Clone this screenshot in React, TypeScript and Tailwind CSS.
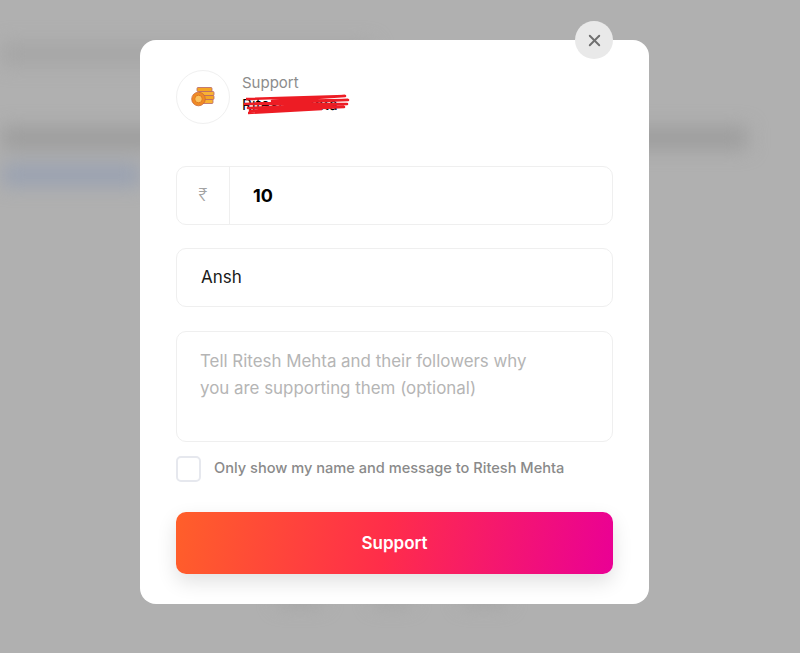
import React from "react";
import { X } from "lucide-react";

function Coins() {
  return (
    <svg width="24" height="21" viewBox="0 0 24 21">
      <rect x="6" y="0.5" width="15" height="4" rx="1" fill="#f5a623" stroke="#b5656b" strokeWidth="0.8" />
      <rect x="8" y="4.5" width="15" height="4" rx="1" fill="#f9b233" stroke="#b5656b" strokeWidth="0.8" />
      <rect x="8" y="8.5" width="15" height="4" rx="1" fill="#f5a623" stroke="#b5656b" strokeWidth="0.8" />
      <rect x="8" y="12.5" width="14" height="4" rx="1" fill="#f9b233" stroke="#b5656b" strokeWidth="0.8" />
      <circle cx="7.5" cy="12" r="6.8" fill="#f08a24" stroke="#c9683a" strokeWidth="0.8" />
      <circle cx="7.5" cy="12" r="3.8" fill="#fbc15e" stroke="#e07b1f" strokeWidth="1" />
    </svg>
  );
}

function Scribble() {
  return (
    <svg className="absolute left-0 -top-[2px]" width="108" height="24" viewBox="0 0 108 24">
      <path d="M4 5 L103 2 L30 7 L106 6 L3 10 L105 10 L6 14 L102 13 L8 17 L60 16 M6 19 L80 15" fill="none" stroke="#ed1c24" strokeWidth="2.6" strokeLinejoin="round" />
    </svg>
  );
}

export default function App() {
  return (
    <div className="relative w-full h-[653px] overflow-hidden bg-[#b0b0b0]" style={{ fontFamily: "Inter, 'Noto Sans', sans-serif" }}>
      {/* blurred page behind */}
      <div className="flex flex-col pt-[44px] pl-[2px] blur-[10px]">
        <div className="w-[370px] h-[20px] bg-[#a4a4a4]" />
        <div className="w-[745px] h-[20px] mt-[64px] bg-[#9a9a9a]" />
        <div className="w-[140px] h-[18px] mt-[18px] bg-[#949eb2]" />
        <div className="flex gap-[52px] mt-[404px] ml-[276px]">
          <div className="w-[44px] h-[16px] bg-[#a4a4a4]" />
          <div className="w-[36px] h-[16px] bg-[#a4a4a4]" />
          <div className="w-[44px] h-[16px] bg-[#a4a4a4]" />
        </div>
      </div>

      <div className="absolute left-[140px] top-[40px] w-[509px] h-[564px] bg-white rounded-[16px] px-[36px] pt-[30px]">
        <button className="absolute left-[435px] -top-[19px] w-[38px] h-[38px] rounded-full bg-[#e9e9e9] flex items-center justify-center text-[#6f6f6f]">
          <X className="w-[19px] h-[19px]" strokeWidth={2.4} />
        </button>

        <div className="flex items-center gap-[12px]">
          <div className="w-[54px] h-[54px] rounded-full border border-[#f0f0f0] flex items-center justify-center">
            <Coins />
          </div>
          <div className="flex flex-col gap-[3px] -mt-[7px]">
            <span className="text-[15px] leading-[20px] text-[#8c8c8c]">Support</span>
            <div className="relative w-[105px] h-[18px] text-[15px] tracking-[0.3px] leading-[18px] text-black whitespace-nowrap">
              <span>Ritesh Mehta</span>
              <Scribble />
            </div>
          </div>
        </div>

        <div className="flex h-[59px] mt-[42px] border border-[#efefef] rounded-[10px]">
          <div className="w-[53px] border-r border-[#efefef] flex items-center justify-center text-[17px] font-light text-[#a3a3a3]">₹</div>
          <div className="flex items-center pl-[23px] text-[18px] font-bold text-black">10</div>
        </div>

        <div className="flex items-center h-[59px] mt-[23px] pl-[24px] border border-[#efefef] rounded-[10px] text-[17px] text-[#1a1a1a]">
          Ansh
        </div>

        <div className="h-[111px] mt-[24px] pl-[23px] pt-[16px] border border-[#efefef] rounded-[10px] text-[16.9px] leading-[27px] text-[#b5b5b5]">
          Tell Ritesh Mehta and their followers why
          <br />
          you are supporting them (optional)
        </div>

        <div className="flex items-center gap-[13px] mt-[14px]">
          <div className="w-[25px] h-[26px] rounded-[5px] bg-white border-2 border-[#e6e8ee]" />
          <span className="text-[14.6px] font-medium text-[#8a8a8a]">Only show my name and message to Ritesh Mehta</span>
        </div>

        <button className="w-full h-[62px] mt-[30px] pt-[2px] rounded-[10px] bg-[linear-gradient(100deg,#ff5f2a_0%,#ff2d4a_48%,#ea0095_100%)] text-white text-[17px] font-semibold shadow-[0_8px_20px_rgba(0,0,0,0.12)]">
          Support
        </button>
      </div>
    </div>
  );
}
